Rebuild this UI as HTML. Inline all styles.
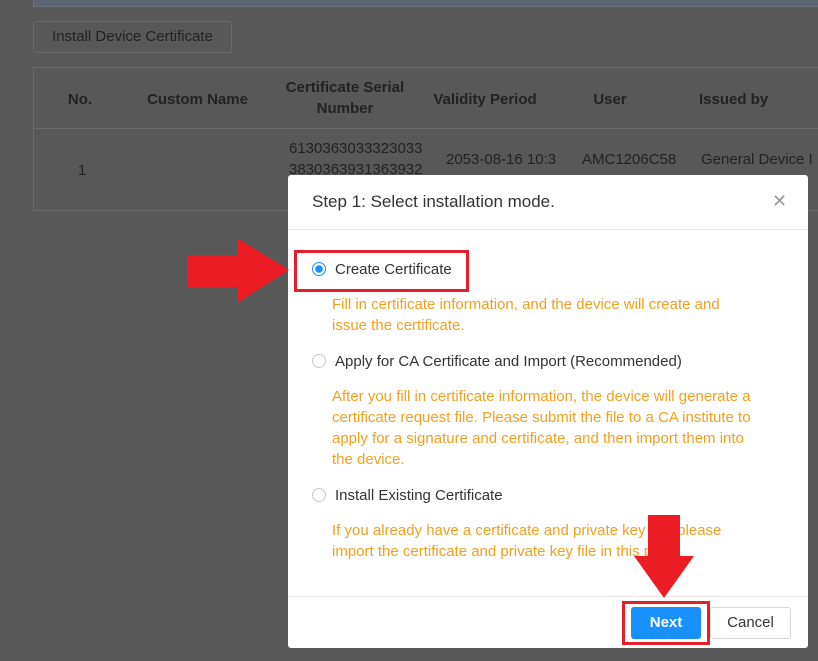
<!DOCTYPE html>
<html><head><meta charset="utf-8"><style>
*{box-sizing:border-box;margin:0;padding:0}
body{width:818px;height:661px;overflow:hidden;background:#585858;font-family:"Liberation Sans",sans-serif;position:relative;color:#1e1e1e}
.abs{position:absolute}
.topbar{left:33px;top:0;width:800px;height:7px;background:#5b6470;border:1px solid #6b7580;border-top:none}
.btn1{left:33px;top:21px;width:199px;height:32px;border:1px solid #6a6a6a;border-radius:3px;font-size:15px;color:#222;line-height:30px;text-align:center}
.tbl{left:33px;top:67px;width:800px;height:144px;border:1px solid #6a6a6a}
.hd{font-size:15px;font-weight:bold;color:#222;text-align:center;line-height:21px;white-space:nowrap}
.cell{font-size:15px;color:#222;text-align:center;line-height:21px;white-space:nowrap}
.modal{left:288px;top:175px;width:520px;height:473px;background:#fff;border-radius:3px}
.title{left:24px;top:17px;font-size:17px;color:#333}
.x{left:484px;top:16px;font-size:18px;color:#999}
.l1{left:0;top:54px;width:520px;height:1px;background:#e6e6e6}
.l2{left:0;top:421px;width:520px;height:1px;background:#e6e6e6}
.opt{left:24px;font-size:15px;color:#333}
.rad{display:inline-block;width:14px;height:14px;border:1px solid #c8c8c8;border-radius:50%;vertical-align:-2px;margin-right:9px}
.rad.on{border-color:#1890ff;background:radial-gradient(circle,#1890ff 0 3.5px,#fff 4px)}
.desc{left:44px;font-size:15px;color:#f0a020;line-height:21px;white-space:nowrap}
.next{left:343px;top:432px;width:70px;height:32px;background:#1890ff;border-radius:3px;color:#fff;font-weight:bold;font-size:15px;text-align:center;line-height:32px}
.cancel{left:422px;top:432px;width:81px;height:32px;border:1px solid #d9d9d9;border-radius:3px;color:#333;font-size:15px;text-align:center;line-height:30px}
</style></head><body>
<div class="abs topbar"></div>
<div class="abs btn1">Install Device Certificate</div>
<div class="abs tbl"><div class="abs" style="left:0;top:60px;width:800px;height:1px;background:#6a6a6a"></div></div>
<div class="abs hd" style="left:60px;top:89px;width:40px">No.</div>
<div class="abs hd" style="left:140px;top:89px;width:115px">Custom Name</div>
<div class="abs hd" style="left:275px;top:77px;width:140px">Certificate Serial<br>Number</div>
<div class="abs hd" style="left:426px;top:89px;width:118px">Validity Period</div>
<div class="abs hd" style="left:580px;top:89px;width:60px">User</div>
<div class="abs hd" style="left:699px;top:89px;text-align:left">Issued by</div>
<div class="abs cell" style="left:62px;top:160px;width:40px">1</div>
<div class="abs cell" style="left:289px;top:138px;text-align:left">6130363033323033<br>3830363931363932</div>
<div class="abs cell" style="left:446px;top:149px;text-align:left">2053-08-16 10:3</div>
<div class="abs cell" style="left:582px;top:149px;text-align:left">AMC1206C58</div>
<div class="abs cell" style="left:701px;top:149px;text-align:left">General Device I</div>
<div class="abs modal">
<div class="abs title">Step 1: Select installation mode.</div>
<div class="abs x">✕</div>
<div class="abs l1"></div>
<div class="abs opt" style="top:86px"><span class="rad on"></span>Create Certificate</div>
<div class="abs desc" style="top:119px">Fill in certificate information, and the device will create and<br>issue the certificate.</div>
<div class="abs opt" style="top:178px"><span class="rad"></span>Apply for CA Certificate and Import (Recommended)</div>
<div class="abs desc" style="top:211px">After you fill in certificate information, the device will generate a<br>certificate request file. Please submit the file to a CA institute to<br>apply for a signature and certificate, and then import them into<br>the device.</div>
<div class="abs opt" style="top:312px"><span class="rad"></span>Install Existing Certificate</div>
<div class="abs desc" style="top:345px">If you already have a certificate and private key file, please<br>import the certificate and private key file in this page.</div>
<div class="abs l2"></div>
<div class="abs next">Next</div>
<div class="abs cancel">Cancel</div>
</div>
<svg class="abs" style="left:0;top:0" width="818" height="661">
<rect x="295.5" y="251.5" width="172" height="39" fill="none" stroke="#e0202a" stroke-width="3"/>
<polygon points="187,255 237,255 237,238 289,270 237,303 237,287 187,287" fill="#ec1c24"/>
<rect x="623.5" y="602.5" width="85" height="41" fill="none" stroke="#e0202a" stroke-width="3"/>
<polygon points="648,515 680,515 680,556 694,556 664,598 634,556 648,556" fill="#ec1c24"/>
</svg>
</body></html>
